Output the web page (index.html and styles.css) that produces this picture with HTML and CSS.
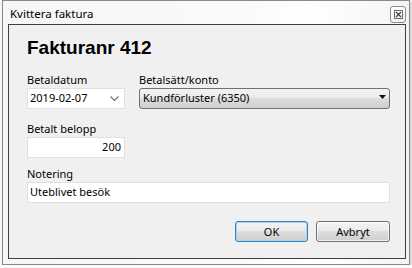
FILE: index.html
```html
<!DOCTYPE html>
<html lang="sv">
<head>
<meta charset="UTF-8">
<meta name="viewport" content="width=device-width, initial-scale=1.0">
<title>Kvittera faktura</title>
<link rel="stylesheet" href="styles.css">
</head>
<body>
<div class="window">
    <div class="titlebar">
        <span class="title">Kvittera faktura</span>
        <button class="close" title="Stäng">
            <svg width="9" height="9" viewBox="0 0 9 9">
                <rect x="0.5" y="0.5" width="8" height="8" fill="none" stroke="#6a6a6a"/>
                <path d="M2 2 L7 7 M7 2 L2 7" stroke="#4a4a4a" stroke-width="1.4"/>
            </svg>
        </button>
    </div>
    <div class="panel">
        <h1>Fakturanr 412</h1>
        <div class="row row-first">
            <div class="field field-date">
                <label>Betaldatum</label>
                <div class="box date">
                    <span>2019-02-07</span>
                    <svg width="9" height="5" viewBox="0 0 9 5">
                        <path d="M0.5 0.5 L4.5 4.5 L8.5 0.5" fill="none" stroke="#707070" stroke-width="1.1"/>
                    </svg>
                </div>
            </div>
            <div class="field field-account">
                <label>Betalsätt/konto</label>
                <div class="combo">
                    <span>Kundförluster (6350)</span>
                    <svg width="7" height="4" viewBox="0 0 7 4">
                        <path d="M0 0 L7 0 L3.5 4 Z" fill="#111"/>
                    </svg>
                </div>
            </div>
        </div>
        <div class="row row-amount">
            <div class="field field-date">
                <label>Betalt belopp</label>
                <div class="box amount">200</div>
            </div>
        </div>
        <div class="row row-note">
            <div class="field field-note">
                <label>Notering</label>
                <div class="box">Uteblivet besök</div>
            </div>
        </div>
        <div class="actions">
            <button class="btn btn-default">OK</button>
            <button class="btn btn-cancel">Avbryt</button>
        </div>
    </div>
</div>
</body>
</html>
```

FILE: styles.css
```css
body {
    margin: 0;
    background-color: #fbfbfb;
    font-family: "Noto Sans", "Open Sans", sans-serif;
    font-size: 11px;
    color: #000;
}

.window {
    margin-left: 2px;
    width: 406px;
    height: 263px;
    border: 1px solid #8a8a8a;
    background: linear-gradient(to right, #f6f6f6, #fafafa 60%, #ffffff 75%, #f4f4f4);
    box-shadow: 1px 1px 3px rgba(0, 0, 0, 0.25);
}

.titlebar {
    display: flex;
    justify-content: space-between;
    align-items: flex-start;
    height: 23px;
}

.title {
    padding: 2px 0 0 7px;
    line-height: 21px;
    font-size: 11.5px;
}

.close {
    display: flex;
    align-items: center;
    justify-content: center;
    box-sizing: border-box;
    width: 16px;
    height: 17px;
    margin: 5px 3px 0 0;
    padding: 0;
    border: 1px solid #8d8d8d;
    border-radius: 3px;
    background: linear-gradient(#ffffff, #f1f1f1);
}

.panel {
    box-sizing: border-box;
    width: 398px;
    height: 235px;
    margin-left: 5px;
    padding: 12px 15px 0 18px;
    border: 1px solid #3f3f3f;
    background-color: #f0f0f0;
}

h1 {
    margin: 0;
    font-family: "Liberation Sans", Arial, sans-serif;
    font-size: 19px;
    font-weight: bold;
    line-height: 22px;
}

.row {
    display: flex;
    gap: 14px;
}

.row-first {
    margin-top: 13px;
}

.row-amount {
    margin-top: 12px;
}

.row-note {
    margin-top: 8px;
}

.field {
    display: flex;
    flex-direction: column;
}

.field label {
    line-height: 16px;
}

.field-date {
    width: 98px;
}

.field-account {
    width: 251px;
}

.field-note {
    width: 100%;
}

.box {
    display: flex;
    align-items: flex-start;
    justify-content: space-between;
    box-sizing: border-box;
    height: 21px;
    padding: 0 3px 2px 2px;
    line-height: 17px;
    border: 1px solid #e0e0e0;
    background-color: #fff;
}

.box svg {
    margin: 7px 2px 0 0;
}

.amount {
    justify-content: flex-end;
}

.combo {
    display: flex;
    align-items: flex-start;
    justify-content: space-between;
    box-sizing: border-box;
    height: 21px;
    padding: 0 3px 2px 3px;
    line-height: 17px;
    border: 1px solid #707070;
    border-radius: 3px;
    background: linear-gradient(#f3f3f3, #ebebeb 45%, #dddddd 50%, #cfcfcf);
}

.combo svg {
    margin: 6px 0 0 0;
}

.actions {
    display: flex;
    justify-content: flex-end;
    gap: 8px;
    margin-top: 18px;
}

.btn {
    box-sizing: border-box;
    height: 21px;
    padding: 0;
    font-family: inherit;
    font-size: 11px;
    line-height: 19px;
    color: #000;
    border: 1px solid #707070;
    border-radius: 3px;
    background: linear-gradient(#f3f3f3, #ebebeb 45%, #dddddd 50%, #cfcfcf);
    box-shadow: inset 0 0 0 1px rgba(255, 255, 255, 0.7);
}

.btn-default {
    width: 73px;
    border-color: #3c7fb1;
    box-shadow: inset 0 0 0 1px #9fdbf7;
}

.btn-cancel {
    width: 74px;
}
```
